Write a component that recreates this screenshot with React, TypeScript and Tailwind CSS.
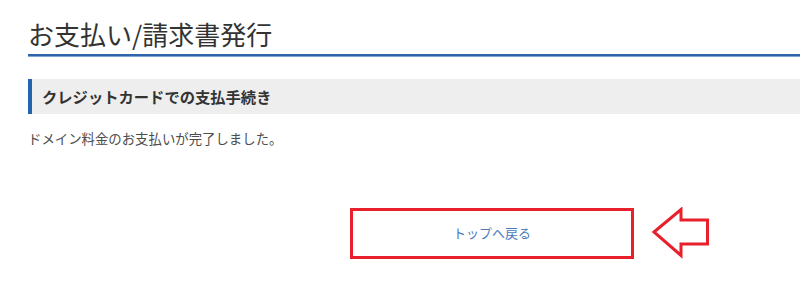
export default function App() {
  return (
    <div
      className="min-h-[299px] bg-white pl-[28px]"
      style={{ fontFamily: '"Noto Sans CJK JP", "Noto Sans", sans-serif' }}
    >
      <h1 className="pt-[14px] pb-[1px] border-b-2 border-[#2d65a8] shadow-[0_1px_0_#7ea6d4] text-[26px] leading-[39px] font-normal text-[#333]">
        お支払い/請求書発行
      </h1>

      <div className="mt-[23px] flex h-[35px] items-center border-l-4 border-[#2463ad] bg-[#eeeeee] pl-[10px]">
        <h2 className="text-[15.3px] font-bold text-[#333]">クレジットカードでの支払手続き</h2>
      </div>

      <p className="mt-[14px] text-[13.4px] leading-[20px] text-[#4d4d4d]">
        ドメイン料金のお支払いが完了しました。
      </p>

      <div className="mt-[59px] flex items-center">
        <button
          type="button"
          className="ml-[322px] flex h-[51px] w-[284px] items-center justify-center border-[3px] border-[#e8202c] bg-white text-[13px] text-[#4a7bbd]"
        >
          トップへ戻る
        </button>
        <svg
          width="58"
          height="52"
          viewBox="0 0 58 52"
          className="ml-[18px]"
          fill="none"
        >
          <path
            d="M2 25 L29 2.5 L29 13 L55.5 13 L55.5 37 L29 37 L29 48.5 Z"
            stroke="#e8202c"
            strokeWidth="3"
            strokeLinejoin="miter"
          />
        </svg>
      </div>
    </div>
  );
}
